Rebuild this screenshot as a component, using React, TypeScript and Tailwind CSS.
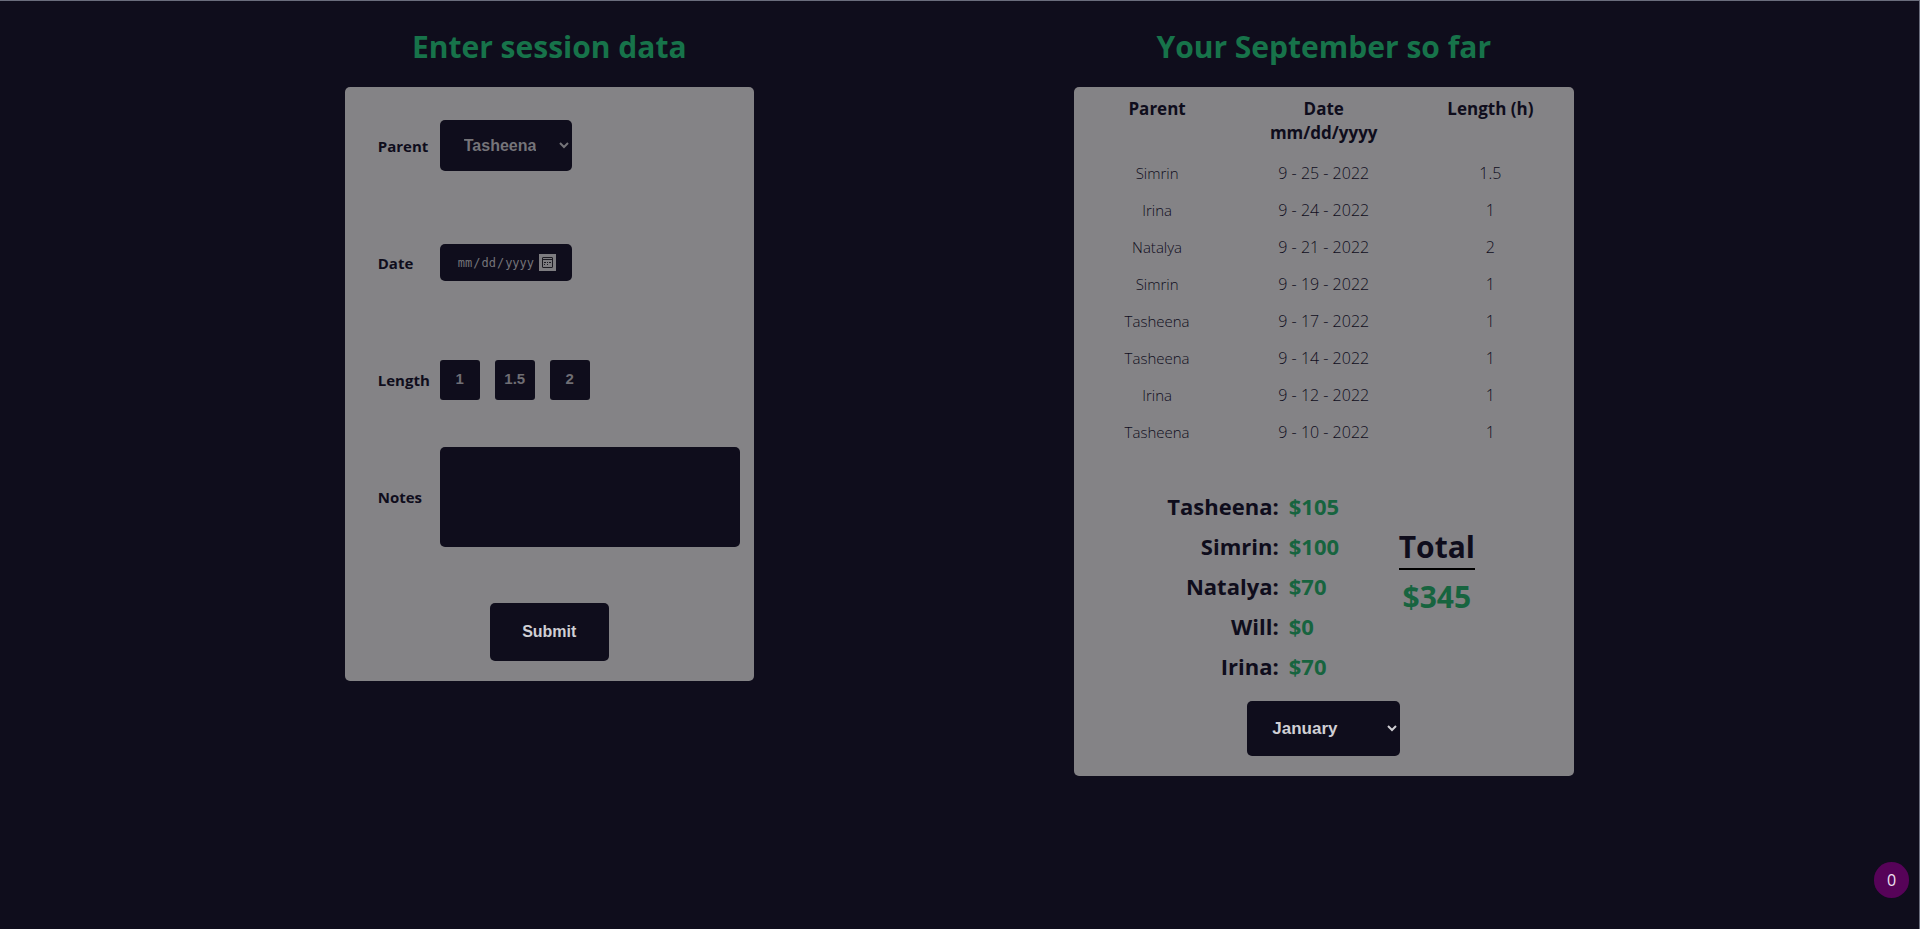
import React, { useState } from "react";

const SANS = "font-['Open_Sans','Noto_Sans',sans-serif]";
const ARIAL = "font-['Liberation_Sans',Arial,sans-serif]";

const parents = ["Tasheena", "Simrin", "Natalya", "Will", "Irina"];

const months = [
  "January",
  "February",
  "March",
  "April",
  "May",
  "June",
  "July",
  "August",
  "September",
  "October",
  "November",
  "December",
];

const sessions = [
  { parent: "Simrin", date: "9 - 25 - 2022", length: "1.5" },
  { parent: "Irina", date: "9 - 24 - 2022", length: "1" },
  { parent: "Natalya", date: "9 - 21 - 2022", length: "2" },
  { parent: "Simrin", date: "9 - 19 - 2022", length: "1" },
  { parent: "Tasheena", date: "9 - 17 - 2022", length: "1" },
  { parent: "Tasheena", date: "9 - 14 - 2022", length: "1" },
  { parent: "Irina", date: "9 - 12 - 2022", length: "1" },
  { parent: "Tasheena", date: "9 - 10 - 2022", length: "1" },
];

const totals = [
  { name: "Tasheena", amount: "$105" },
  { name: "Simrin", amount: "$100" },
  { name: "Natalya", amount: "$70" },
  { name: "Will", amount: "$0" },
  { name: "Irina", amount: "$70" },
];

function Heading({ children }: { children: React.ReactNode }) {
  return (
    <h1 className="mb-[18px] text-center text-[30px] leading-[44px] font-bold text-[#17734a]">
      {children}
    </h1>
  );
}

function CalendarIcon() {
  return (
    <svg
      viewBox="0 0 17 17"
      className="pointer-events-none absolute top-2.5 right-4 size-[17px] bg-[#7d7c80]"
      fill="none"
      stroke="#1c1b22"
      aria-hidden="true"
    >
      <rect x="3.5" y="3.5" width="10" height="10" rx="0.5" />
      <path d="M3.5 5.5h10" />
      <path d="M8 8.5h1M10 8.5h2M5 8.5h2M5 10.5h1M8 10.5h1" />
    </svg>
  );
}

function SessionForm() {
  const [length, setLength] = useState("");

  return (
    <form
      className="w-full max-w-[409px] rounded-[5px] bg-[#848386] pb-5"
      onSubmit={(e) => e.preventDefault()}
    >
      <div className="grid auto-rows-[117px] grid-cols-[62px_1fr] items-center pr-3.5 pl-[33px] text-[15px] font-bold">
        <label htmlFor="parent" className="pt-0.5">
          Parent
        </label>
        <select
          id="parent"
          className={`${ARIAL} h-[51px] w-[132px] rounded-[5px] bg-[#0f0d1c] px-5 text-[16px] font-bold text-[#757479]`}
        >
          {parents.map((p) => (
            <option key={p}>{p}</option>
          ))}
        </select>

        <label htmlFor="date" className="pt-0.5">
          Date
        </label>
        <div className="relative w-[132px]">
          <input
            id="date"
            type="date"
            className="block h-[37px] w-full rounded-[5px] bg-[#0f0d1c] pr-4 pl-[17px] font-['DejaVu_Sans_Mono',monospace] text-[12px] font-normal text-[#757479] [&::-webkit-calendar-picker-indicator]:m-0 [&::-webkit-calendar-picker-indicator]:size-[17px] [&::-webkit-calendar-picker-indicator]:p-0 [&::-webkit-calendar-picker-indicator]:opacity-0 [&::-webkit-datetime-edit-fields-wrapper]:p-0 [&::-webkit-datetime-edit]:p-0"
          />
          <CalendarIcon />
        </div>

        <span id="length-label" className="pt-0.5">
          Length
        </span>
        <div role="group" aria-labelledby="length-label" className="flex gap-[15px]">
          {["1", "1.5", "2"].map((v) => (
            <button
              key={v}
              type="button"
              aria-pressed={length === v}
              onClick={() => setLength(v)}
              className={`${ARIAL} size-10 rounded-[3px] bg-[#0f0d1c] text-[15px] font-bold text-[#6f6e74]`}
            >
              {v}
            </button>
          ))}
        </div>

        <label htmlFor="notes" className="pt-0.5">
          Notes
        </label>
        <textarea
          id="notes"
          className="h-[100px] w-full resize-none rounded-[5px] bg-[#0f0d1c] p-2 text-[#d0cfd4]"
        />
      </div>

      <div className="mt-12 flex justify-center">
        <button
          type="submit"
          className={`${ARIAL} h-[58px] w-[119px] rounded-[5px] bg-[#0f0d1c] text-[16px] font-bold text-[#d0cfd4]`}
        >
          Submit
        </button>
      </div>
    </form>
  );
}

function Summary() {
  return (
    <div className="w-full max-w-[500px] rounded-[5px] bg-[#848386] pb-5">
      <table className="w-full table-fixed text-center">
        <thead>
          <tr className="align-top text-[17px] leading-6">
            <th className="pt-2.5 pb-[9px] font-bold">Parent</th>
            <th className="pt-2.5 pb-[9px] font-bold">
              Date
              <br />
              mm/dd/yyyy
            </th>
            <th className="pt-2.5 pb-[9px] font-bold">Length (h)</th>
          </tr>
        </thead>
        <tbody>
          {sessions.map((s) => (
            <tr key={s.date} className="h-[37px] text-[16px] leading-5 font-light">
              <td className="text-[15px]">{s.parent}</td>
              <td>{s.date}</td>
              <td>{s.length}</td>
            </tr>
          ))}
        </tbody>
      </table>

      <div className="mt-9 flex items-start font-bold">
        <dl className="grid w-[65%] auto-rows-[40px] grid-cols-[205px_1fr] items-center gap-x-2.5 text-[22px]">
          {totals.map((t) => (
            <React.Fragment key={t.name}>
              <dt className="text-right">{t.name}:</dt>
              <dd className="text-[#17643f]">{t.amount}</dd>
            </React.Fragment>
          ))}
        </dl>
        <div className="mt-10 text-center text-[30px]">
          <h2 className="border-b-2 border-black leading-[42px]">Total</h2>
          <p className="pt-1.5 leading-[42px] text-[#17643f]">$345</p>
        </div>
      </div>

      <div className="mt-[15px] flex justify-center">
        <select
          aria-label="Month"
          className={`${ARIAL} h-[55px] w-[153px] rounded-[5px] bg-[#0f0d1c] px-[21px] text-[17px] font-bold text-[#d0cfd4]`}
        >
          {months.map((m) => (
            <option key={m}>{m}</option>
          ))}
        </select>
      </div>
    </div>
  );
}

export default function App() {
  return (
    <div
      className={`${SANS} min-h-screen border-t border-r border-[#6a6d7c] bg-[#0f0d1c] text-[#0f0d1c]`}
    >
      <main className="grid items-start pt-6 lg:grid-cols-2 lg:pr-[208px] lg:pl-[162px]">
        <section className="flex flex-col items-center">
          <Heading>Enter session data</Heading>
          <SessionForm />
        </section>
        <section className="flex flex-col items-center">
          <Heading>Your September so far</Heading>
          <Summary />
        </section>
      </main>
      <div className="fixed right-[11px] bottom-[31px] flex h-9 w-[35px] items-center justify-center rounded-full bg-[#560358] text-[16px] text-[#eee0f2]">
        0
      </div>
    </div>
  );
}
